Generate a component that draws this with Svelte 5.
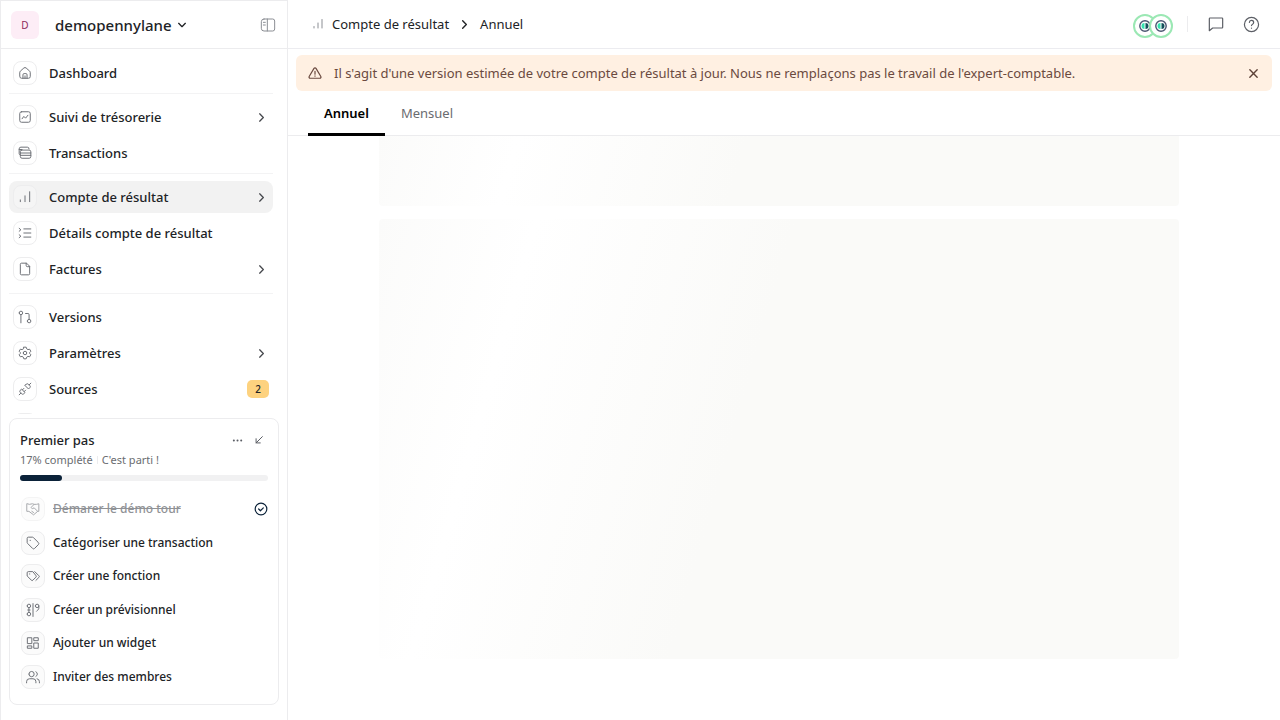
<script lang="ts">
	type NavItem = {
		label: string;
		icon: string;
		expandable?: boolean;
		active?: boolean;
		badge?: number;
	};

	const icons: Record<string, string> = {
		home: 'M3 11a3 3 0 0 1 1-2.200l6-5.300a3 3 0 0 1 4 0l6 5.300a3 3 0 0 1 1 2.200v7a3 3 0 0 1-3 3H6a3 3 0 0 1-3-3zM8.500 21v-6a2 2 0 0 1 2-2h3a2 2 0 0 1 2 2v6M12 17v4',
		treasury: 'M6 3h12a3 3 0 0 1 3 3v12a3 3 0 0 1-3 3H6a3 3 0 0 1-3-3V6a3 3 0 0 1 3-3zM7 15l3-4 3 3 4-5',
		cards: 'M3 15a2 2 0 0 1-1-2V5a3 3 0 0 1 3-3h11a3 3 0 0 1 3 3M6 7h13a3 3 0 0 1 3 3v8a3 3 0 0 1-3 3H7a3 3 0 0 1-3-3V9a2 2 0 0 1 2-2zM2 6h5M4 12h18M4 16h18',
		bars: 'M4 20v-3M12 20V10M20 20V3',
		list: 'M10 5h12M10 12h12M10 19h12M2 4l3 2.500L2 9M2 15l3 2.500L2 20',
		file: 'M14 2H6a2 2 0 0 0-2 2v16a2 2 0 0 0 2 2h12a2 2 0 0 0 2-2V8zM14 2v4a2 2 0 0 0 2 2h4',
		versions: 'M2 5a3 3 0 1 0 6 0a3 3 0 1 0-6 0M5 8v14M16 19a3 3 0 1 0 6 0a3 3 0 1 0-6 0M13 6h4a2 2 0 0 1 2 2v8',
		gear: 'M9 12a3 3 0 1 0 6 0a3 3 0 1 0-6 0M10 2h4l1 3 2 1.200 3-.700 2 3.500-2 2.200v1.600l2 2.200-2 3.500-3-.700L15 19l-1 3h-4l-1-3-2-1.200-3 .700L2 15l2-2.200v-1.600L2 9l2-3.500 3 .700L9 5z',
		plug: 'M6.300 20.300a2.400 2.400 0 0 0 3.400 0L12 18l-6-6-2.300 2.300a2.400 2.400 0 0 0 0 3.400zM2 22l3-3M7.500 13.500L10 11M10.500 16.500L13 14M12 6l6 6 2.300-2.300a2.400 2.400 0 0 0 0-3.400l-2.600-2.600a2.400 2.400 0 0 0-3.400 0zM19 5l3-3',
		handshake: 'M2 3l4 1 5-1 3 1 4 0 4-1v13h-2l-7 6-8-6H2zM14 4l-5 5a2 2 0 0 0 3 2l2-1 6 6M10 16l3 2',
		tag: 'M12.600 2.600A2 2 0 0 0 11.200 2H4a2 2 0 0 0-2 2v7.200a2 2 0 0 0 .600 1.400l8.700 8.700a2.400 2.400 0 0 0 3.400 0l6.600-6.600a2.400 2.400 0 0 0 0-3.400zM7 7.500h.500',
		tags: 'M11 4.500H4a2 2 0 0 0-2 2V12l7 7a2 2 0 0 0 3 0l5-5a2 2 0 0 0 0-3zM6 8.500h.500M15 4.500l7 7a2 2 0 0 1 0 3l-5 5',
		forecast: 'M2 5a3 3 0 1 0 6 0a3 3 0 1 0-6 0M2 19a3 3 0 1 0 6 0a3 3 0 1 0-6 0M5 8v8M3 12h4M12 1v22M16 5a3 3 0 1 0 6 0a3 3 0 1 0-6 0M22 5v4c0 3-3 3-4 5',
		widget: 'M3 3h7v10H3zM14 3h7v5h-7zM14 12h7v9h-7zM3 17h7v4H3z',
		users: 'M5 7a4.500 4.500 0 1 0 9 0a4.500 4.500 0 1 0-9 0M1 22v-2a5 5 0 0 1 5-5h6a5 5 0 0 1 5 5v2M17 3a4.500 4.500 0 0 1 0 8M19 15a5 5 0 0 1 4 5v2',
		right: 'M8 4l8 8-8 8',
		down: 'M4 8l8 8 8-8',
		panel: 'M6 3h13a3 3 0 0 1 3 3v12a3 3 0 0 1-3 3H6a4 4 0 0 1-4-4V7a4 4 0 0 1 4-4zM11 3v18M5 8h3M5 12h3',
		collapse: 'M20 4L5 19M5 9v10h10',
		dots: 'M4 12h.100M12 12h.100M20 12h.100',
		check: 'M2 12a10 10 0 1 0 20 0a10 10 0 1 0-20 0M8 12l3 3 5-5',
		warning: 'M10.300 4L2 18a2 2 0 0 0 1.700 3h16.600a2 2 0 0 0 1.700-3L13.700 4a2 2 0 0 0-3.400 0zM12 9v5M12 17v.500',
		close: 'M4 4l16 16M20 4L4 20',
		chat: 'M3 3h18a1 1 0 0 1 1 1v13a1 1 0 0 1-1 1H7l-5 4V4a1 1 0 0 1 1-1z',
		help: 'M2 12a10 10 0 1 0 20 0a10 10 0 1 0-20 0M9 9a3 3 0 0 1 6 .500c0 2-3 2.500-3 4M12 17v.300'
	};

	const navGroups: NavItem[][] = [
		[{ label: 'Dashboard', icon: 'home' }],
		[
			{ label: 'Suivi de trésorerie', icon: 'treasury', expandable: true },
			{ label: 'Transactions', icon: 'cards' }
		],
		[
			{ label: 'Compte de résultat', icon: 'bars', expandable: true, active: true },
			{ label: 'Détails compte de résultat', icon: 'list' },
			{ label: 'Factures', icon: 'file', expandable: true }
		],
		[
			{ label: 'Versions', icon: 'versions' },
			{ label: 'Paramètres', icon: 'gear', expandable: true },
			{ label: 'Sources', icon: 'plug', badge: 2 }
		]
	];

	const steps = [
		{ label: 'Démarer le démo tour', icon: 'handshake', done: true },
		{ label: 'Catégoriser une transaction', icon: 'tag', done: false },
		{ label: 'Créer une fonction', icon: 'tags', done: false },
		{ label: 'Créer un prévisionnel', icon: 'forecast', done: false },
		{ label: 'Ajouter un widget', icon: 'widget', done: false },
		{ label: 'Inviter des membres', icon: 'users', done: false }
	];

	let progress = $derived(Math.round((steps.filter((s) => s.done).length / steps.length) * 100));

	const tabs = ['Annuel', 'Mensuel'];
	let activeTab = $state('Annuel');
	let showBanner = $state(true);
</script>

{#snippet icon(name: string, size = 14, weight = 1.5)}
	<svg
		width={size}
		height={size}
		viewBox="0 0 24 24"
		fill="none"
		stroke="currentColor"
		stroke-width={(weight * 24) / size}
		stroke-linecap="round"
		stroke-linejoin="round"
		aria-hidden="true"
	>
		<path d={icons[name]} />
	</svg>
{/snippet}

{#snippet avatar()}
	<svg class="avatar" width="24" height="24" viewBox="0 0 24 24" aria-hidden="true">
		<circle cx="12" cy="12" r="11" fill="#fff" stroke="#9be8b4" stroke-width="2" />
		<circle cx="12" cy="12" r="5.200" fill="#fff" stroke="#4a5570" stroke-width="1.400" />
		<path d="M11.500 9v6a3 3 0 0 1 0-6z" fill="#35e3b0" />
		<path d="M12.500 9v6a3 3 0 0 0 0-6z" fill="#12505a" />
	</svg>
{/snippet}

<div class="app">
	<aside class="sidebar">
		<header class="workspace">
			<span class="workspace-logo">D</span>
			<button class="workspace-name">
				demopennylane
				{@render icon('down', 10, 1.3)}
			</button>
			<button class="icon-button muted" aria-label="Réduire le menu">
				{@render icon('panel', 16, 1)}
			</button>
		</header>

		<nav class="nav">
			{#each navGroups as group}
				<ul class="nav-group">
					{#each group as item}
						<li>
							<a class="nav-item" class:active={item.active} href="#{item.icon}">
								<span class="tile">{@render icon(item.icon, 14, 1)}</span>
								<span class="nav-label">{item.label}</span>
								{#if item.expandable}
									<span class="nav-chevron">{@render icon('right', 11, 1.3)}</span>
								{/if}
								{#if item.badge}
									<span class="badge">{item.badge}</span>
								{/if}
							</a>
						</li>
					{/each}
				</ul>
			{/each}
			<div class="nav-item nav-more"><span class="tile"></span></div>
		</nav>

		<section class="onboarding">
			<div class="onboarding-head">
				<h2>Premier pas</h2>
				<button class="icon-button" aria-label="Options">{@render icon('dots', 11, 2)}</button>
				<button class="icon-button" aria-label="Replier">{@render icon('collapse', 10, 1)}</button>
			</div>
			<p class="onboarding-status">
				<span>{progress}% complété</span>
				<span class="status-divider"></span>
				<span>C'est parti !</span>
			</p>
			<div class="progress">
				<div class="progress-fill" style="width: {progress}%"></div>
			</div>
			<ul class="steps">
				{#each steps as step}
					<li>
						<button class="step" class:done={step.done}>
							<span class="tile">{@render icon(step.icon, 14, 1)}</span>
							<span class="step-label">{step.label}</span>
							{#if step.done}
								<span class="step-check">{@render icon('check', 14, 1.2)}</span>
							{/if}
						</button>
					</li>
				{/each}
			</ul>
		</section>
	</aside>

	<main class="main">
		<header class="topbar">
			<nav class="breadcrumb">
				<span class="crumb-icon">{@render icon('bars', 12, 1)}</span>
				<a href="#bars">Compte de résultat</a>
				<span class="crumb-chevron">{@render icon('right', 11, 1.4)}</span>
				<a href="#annuel">Annuel</a>
			</nav>
			<div class="avatars">
				{@render avatar()}
				{@render avatar()}
			</div>
			<div class="actions">
				<button class="icon-button" aria-label="Messages">{@render icon('chat', 16, 1.2)}</button>
				<button class="icon-button" aria-label="Aide">{@render icon('help', 17, 1.2)}</button>
			</div>
		</header>

		{#if showBanner}
			<div class="banner">
				{@render icon('warning', 14, 1.2)}
				<p>
					Il s'agit d'une version estimée de votre compte de résultat à jour. Nous ne remplaçons pas
					le travail de l'expert-comptable.
				</p>
				<button class="icon-button" aria-label="Fermer" onclick={() => (showBanner = false)}>
					{@render icon('close', 11, 1.4)}
				</button>
			</div>
		{/if}

		<div class="tabs" role="tablist">
			{#each tabs as tab}
				<button
					class="tab"
					class:selected={tab === activeTab}
					role="tab"
					aria-selected={tab === activeTab}
					onclick={() => (activeTab = tab)}
				>
					{tab}
				</button>
			{/each}
		</div>

		<div class="content">
			<div class="skeleton skeleton-top"></div>
			<div class="skeleton skeleton-body"></div>
		</div>
	</main>
</div>

<style>
	:global(body) {
		margin: 0;
		background: #fff;
	}
	.app {
		display: flex;
		height: 100vh;
		font-family: 'Noto Sans', 'Open Sans', sans-serif;
		font-size: 13px;
		color: #212326;
	}
	.app * {
		box-sizing: border-box;
	}
	svg {
		display: block;
		flex: none;
	}
	ul {
		list-style: none;
		margin: 0;
		padding: 0;
	}
	button {
		border: none;
		background: none;
		padding: 0;
		font: inherit;
		color: inherit;
		cursor: pointer;
	}
	a {
		color: inherit;
		text-decoration: none;
	}
	.icon-button {
		display: grid;
		place-items: center;
		color: #5c5f66;
	}
	.icon-button.muted {
		color: #8b8e94;
	}

	.sidebar {
		display: flex;
		flex-direction: column;
		flex: none;
		width: 288px;
		border: 1px solid #ececee;
		border-bottom: none;
	}
	.workspace {
		display: flex;
		align-items: center;
		height: 48px;
		flex: none;
		padding: 0 11px 0 10px;
		border-bottom: 1px solid #ececee;
	}
	.workspace-logo {
		display: grid;
		place-items: center;
		width: 28px;
		height: 28px;
		border-radius: 6px;
		background: #fdedf6;
		color: #8c2a5c;
		font-size: 10px;
	}
	.workspace-name {
		display: flex;
		align-items: center;
		gap: 5px;
		margin: 0 auto 0 16px;
		font-size: 15px;
		font-weight: 500;
	}

	.nav {
		flex: 1;
		min-height: 0;
		overflow: hidden;
		padding: 8px 14px 0 8px;
	}
	.nav-group {
		display: flex;
		flex-direction: column;
		gap: 4px;
	}
	.nav-group + .nav-group {
		margin-top: 4px;
		padding-top: 7px;
		border-top: 1px solid #f3f3f4;
	}
	.nav-group:nth-child(4) {
		margin-top: 8px;
	}
	.nav-item {
		display: flex;
		align-items: center;
		height: 32px;
		padding: 0 4px;
		border-radius: 8px;
		font-weight: 500;
	}
	.nav-item.active {
		background: #f2f2f2;
	}
	.nav-item.active .tile {
		background: #f5f5f5;
	}
	.nav-more {
		margin-top: 4px;
	}
	.nav-label {
		flex: 1;
		margin-left: 12px;
	}
	.nav-chevron {
		margin-right: 2px;
		color: #46484d;
	}
	.badge {
		width: 22px;
		border-radius: 5px;
		background: #fdd27f;
		font-size: 10px;
		line-height: 18px;
		text-align: center;
	}
	.tile {
		display: grid;
		place-items: center;
		flex: none;
		width: 24px;
		height: 24px;
		border: 1px solid #ededee;
		border-radius: 8px;
		color: #6f7278;
	}

	.onboarding {
		flex: none;
		margin: 4px 8px 15px;
		padding: 11px 10px 15px;
		border: 1px solid #ececee;
		border-radius: 8px;
	}
	.onboarding-head {
		display: flex;
		align-items: center;
		gap: 11px;
		height: 20px;
		padding-right: 4px;
	}
	h2 {
		flex: 1;
		margin: 0;
		font-size: 13px;
		font-weight: 500;
	}
	.onboarding-status {
		display: flex;
		align-items: center;
		gap: 4px;
		margin: 0;
		font-size: 11px;
		line-height: 20px;
		color: #6a6c70;
	}
	.status-divider {
		width: 1px;
		height: 8px;
		background: #ececee;
	}
	.progress {
		height: 6px;
		margin: 5px 0 16px;
		border-radius: 3px;
		background: #f1f1f2;
	}
	.progress-fill {
		height: 100%;
		border-radius: 3px;
		background: #0b2239;
	}
	.steps {
		display: flex;
		flex-direction: column;
		justify-content: space-between;
		height: 192px;
	}
	.step {
		display: flex;
		align-items: center;
		width: 100%;
		padding-left: 1px;
	}
	.step-label {
		flex: 1;
		margin-left: 8px;
		font-size: 12px;
		line-height: 24px;
		font-weight: 500;
		text-align: left;
	}
	.step .tile {
		background: #fbfbfb;
	}
	.step.done .tile {
		opacity: 0.6;
	}
	.step.done .step-label {
		color: #909296;
		text-decoration: line-through;
	}
	.step-check {
		color: #0b2239;
	}

	.main {
		display: flex;
		flex-direction: column;
		flex: 1;
		min-width: 0;
	}
	.topbar {
		display: flex;
		align-items: center;
		flex: none;
		height: 49px;
		padding: 0 20px 0 24px;
		border-bottom: 1px solid #ececf0;
	}
	.breadcrumb {
		display: flex;
		align-items: center;
		flex: 1;
	}
	.crumb-icon {
		margin-right: 8px;
		color: #8b8e94;
	}
	.crumb-chevron {
		margin: 0 10px;
	}
	.avatars {
		display: flex;
		padding: 3px 14px 0 0;
	}
	.avatar + .avatar {
		margin-left: -8px;
	}
	.actions {
		display: flex;
		align-items: center;
		gap: 19px;
		height: 16px;
		padding-left: 20px;
		border-left: 1px solid #ececee;
	}
	.banner {
		display: flex;
		align-items: center;
		gap: 12px;
		flex: none;
		min-height: 36px;
		margin: 6px 8px 0;
		padding: 0 13px 0 12px;
		border-radius: 6px;
		background: #fff0e2;
		color: #6b4a40;
	}
	.banner p {
		flex: 1;
		margin: 0;
		line-height: 20px;
	}
	.banner .icon-button {
		color: #5d4238;
	}
	.tabs {
		display: flex;
		flex: none;
		height: 45px;
		padding: 2px 20px 0;
		border-bottom: 1px solid #ececee;
	}
	.tab {
		margin-bottom: -1px;
		padding: 0 16px;
		border-bottom: 3px solid transparent;
		color: #6a6c70;
	}
	.tab.selected {
		border-bottom-color: #000;
		color: #000;
		font-weight: 600;
	}
	.content {
		display: flex;
		flex-direction: column;
		align-items: center;
		gap: 13px;
		flex: 1;
		min-height: 0;
		overflow: hidden;
		padding: 0 10px 61px 0;
	}
	.skeleton {
		width: 100%;
		max-width: 800px;
		border-radius: 4px;
		background: linear-gradient(106deg, #fbfbfa 0%, #fff 17%, #fafaf8 45%);
	}
	.skeleton-top {
		flex: none;
		height: 70px;
		border-radius: 0 0 4px 4px;
	}
	.skeleton-body {
		flex: 1;
	}
</style>
